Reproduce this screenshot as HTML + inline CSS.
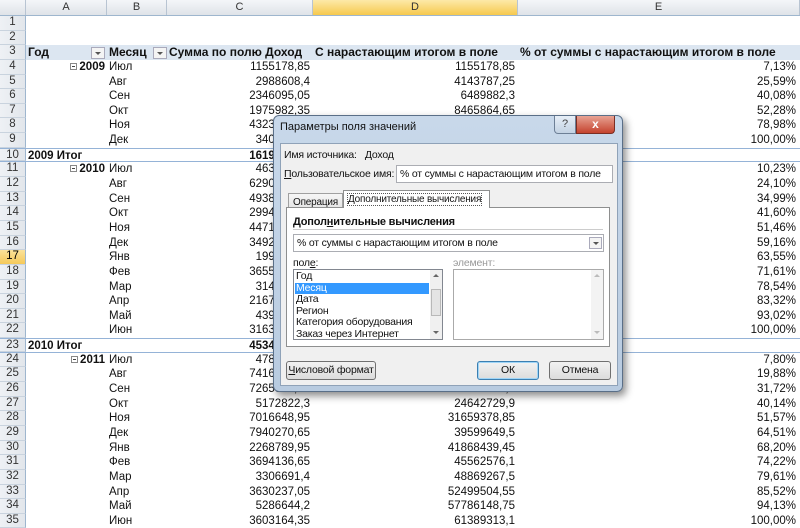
<!DOCTYPE html>
<html><head><meta charset="utf-8">
<style>
*{margin:0;padding:0;box-sizing:border-box}
body{width:800px;height:528px;overflow:hidden;background:#fff;font-family:"Liberation Sans","DejaVu Sans",sans-serif;font-size:11.5px;color:#111;position:relative}
.hdr{position:absolute;top:0;left:0;width:800px;height:16px;background:linear-gradient(#f4f6f9,#dfe3e8);border-bottom:1px solid #9eb6ce;display:flex}
.hdr div{border-right:1px solid #b8c4d2;text-align:center;font-size:11px;line-height:15px;color:#333}
.rows{position:absolute;top:16px;left:0;width:800px}
.r{height:14.65px;display:flex;line-height:14.65px;white-space:nowrap}
.n{width:26px;background:linear-gradient(90deg,#eef1f5,#e2e6eb);border-right:1px solid #9eb6ce;border-bottom:1px solid #c9d3de;text-align:center;color:#333;font-size:11.5px;line-height:13.65px}
.a{width:81px;text-align:right;padding-right:2px;font-weight:bold}
.b{width:60px;padding-left:2px}
.c{width:146px;text-align:right;padding-right:3px}
.d{width:205px;text-align:right;padding-right:3px}
.e{width:282px;text-align:right;padding-right:4px}
.h3 > div:not(.n){background:#dce6f1;font-weight:bold;font-size:12px}
.tot{border-top:1px solid #95b3d7;border-bottom:1px solid #95b3d7}
.tot .n{border-bottom:1px solid #c9d3de}
.tot .a{text-align:left;padding-left:2px;width:141px}
.tot .b{display:none}
.tot .c{font-weight:bold;width:146px}
.bx{display:inline-block;width:7px;height:7px;border:1px solid #888;position:relative;margin-right:2px;vertical-align:0px}
.bx:after{content:"";position:absolute;left:1px;right:1px;top:2px;height:1px;background:#444}
.dd{display:inline-block;width:14px;height:12px;border:1px solid #aab;background:#f4f4f4;vertical-align:middle;position:relative}
.dd:after{content:"";position:absolute;left:3px;top:4px;border-left:3px solid transparent;border-right:3px solid transparent;border-top:3px solid #555}
.sel{background:linear-gradient(#fbe29a,#f5c95a)!important;color:#000}
.dlg{position:absolute;left:273px;top:115px;width:350px;height:277px;background:linear-gradient(#c8d8ea,#b8cbe0);border:1px solid #5a6f88;border-radius:6px;box-shadow:3px 4px 8px rgba(0,0,0,.45)}
.ttl{position:absolute;left:6px;top:5px;font-size:11px;color:#111}
.inner{position:absolute;left:6px;top:27px;width:338px;height:243px;background:#f0f0f0;border:1px solid #8fa2b8}
.tb{position:absolute;font-size:10.5px;letter-spacing:-0.2px;color:#111;white-space:nowrap}
.inp{position:absolute;background:#fff;border:1px solid #abadb3}
.btn{position:absolute;height:19px;border:1px solid #707070;border-radius:3px;background:linear-gradient(#f2f2f2,#dcdcdc);text-align:center;font-size:10.5px;letter-spacing:-0.2px;line-height:17px;white-space:nowrap}
</style></head><body>
<div class="hdr">
<div style="width:26px"></div><div style="width:81px">A</div><div style="width:60px">B</div><div style="width:146px">C</div><div style="width:205px;background:linear-gradient(#fde9a8,#f6c94e);">D</div><div style="width:282px">E</div>
</div>
<div class="rows">
<div class="r"><div class="n">1</div></div>
<div class="r"><div class="n">2</div></div>
<div class="r h3"><div class="n">3</div><div class="a" style="text-align:left;padding-left:2px;display:flex;justify-content:space-between;align-items:center">Год<span class="dd"></span></div><div class="b" style="display:flex;justify-content:space-between;align-items:center">Месяц<span class="dd"></span></div><div class="c" style="text-align:left;padding-left:2px">Сумма по полю Доход</div><div class="d" style="text-align:left;padding-left:2px">С нарастающим итогом в поле</div><div class="e" style="text-align:left;padding-left:2px">% от суммы с нарастающим итогом в поле</div></div>
<div class="r"><div class="n">4</div><div class="a"><span class="bx"></span>2009</div><div class="b">Июл</div><div class="c">1155178,85</div><div class="d">1155178,85</div><div class="e">7,13%</div></div>
<div class="r"><div class="n">5</div><div class="a"></div><div class="b">Авг</div><div class="c">2988608,4</div><div class="d">4143787,25</div><div class="e">25,59%</div></div>
<div class="r"><div class="n">6</div><div class="a"></div><div class="b">Сен</div><div class="c">2346095,05</div><div class="d">6489882,3</div><div class="e">40,08%</div></div>
<div class="r"><div class="n">7</div><div class="a"></div><div class="b">Окт</div><div class="c">1975982,35</div><div class="d">8465864,65</div><div class="e">52,28%</div></div>
<div class="r"><div class="n">8</div><div class="a"></div><div class="b">Ноя</div><div class="c">4323581,35</div><div class="d">12789446</div><div class="e">78,98%</div></div>
<div class="r"><div class="n">9</div><div class="a"></div><div class="b">Дек</div><div class="c">3404416,9</div><div class="d">16193862,9</div><div class="e">100,00%</div></div>
<div class="r tot"><div class="n">10</div><div class="a">2009 Итог</div><div class="b"></div><div class="c">16193862,9</div><div class="d"></div><div class="e"></div></div>
<div class="r"><div class="n">11</div><div class="a"><span class="bx"></span>2010</div><div class="b">Июл</div><div class="c">4637915,4</div><div class="d">4637915,4</div><div class="e">10,23%</div></div>
<div class="r"><div class="n">12</div><div class="a"></div><div class="b">Авг</div><div class="c">6290043,75</div><div class="d">10927959,15</div><div class="e">24,10%</div></div>
<div class="r"><div class="n">13</div><div class="a"></div><div class="b">Сен</div><div class="c">4938146,55</div><div class="d">15866105,7</div><div class="e">34,99%</div></div>
<div class="r"><div class="n">14</div><div class="a"></div><div class="b">Окт</div><div class="c">2994950,65</div><div class="d">18861056,35</div><div class="e">41,60%</div></div>
<div class="r"><div class="n">15</div><div class="a"></div><div class="b">Ноя</div><div class="c">4471720,25</div><div class="d">23332776,6</div><div class="e">51,46%</div></div>
<div class="r"><div class="n">16</div><div class="a"></div><div class="b">Дек</div><div class="c">3492043,15</div><div class="d">26824819,75</div><div class="e">59,16%</div></div>
<div class="r"><div class="n sel">17</div><div class="a"></div><div class="b">Янв</div><div class="c">1990463,9</div><div class="d">28815283,65</div><div class="e">63,55%</div></div>
<div class="r"><div class="n">18</div><div class="a"></div><div class="b">Фев</div><div class="c">3655312,35</div><div class="d">32470596</div><div class="e">71,61%</div></div>
<div class="r"><div class="n">19</div><div class="a"></div><div class="b">Мар</div><div class="c">3142540,4</div><div class="d">35613136,4</div><div class="e">78,54%</div></div>
<div class="r"><div class="n">20</div><div class="a"></div><div class="b">Апр</div><div class="c">2167870,05</div><div class="d">37781006,45</div><div class="e">83,32%</div></div>
<div class="r"><div class="n">21</div><div class="a"></div><div class="b">Май</div><div class="c">4397939,1</div><div class="d">42178945,55</div><div class="e">93,02%</div></div>
<div class="r"><div class="n">22</div><div class="a"></div><div class="b">Июн</div><div class="c">3163164,35</div><div class="d">45342109,9</div><div class="e">100,00%</div></div>
<div class="r tot"><div class="n">23</div><div class="a">2010 Итог</div><div class="b"></div><div class="c">45342109,9</div><div class="d"></div><div class="e"></div></div>
<div class="r"><div class="n">24</div><div class="a"><span class="bx"></span>2011</div><div class="b">Июл</div><div class="c">4787624,5</div><div class="d">4787624,5</div><div class="e">7,80%</div></div>
<div class="r"><div class="n">25</div><div class="a"></div><div class="b">Авг</div><div class="c">7416974,05</div><div class="d">12204598,55</div><div class="e">19,88%</div></div>
<div class="r"><div class="n">26</div><div class="a"></div><div class="b">Сен</div><div class="c">7265309,05</div><div class="d">19469907,6</div><div class="e">31,72%</div></div>
<div class="r"><div class="n">27</div><div class="a"></div><div class="b">Окт</div><div class="c">5172822,3</div><div class="d">24642729,9</div><div class="e">40,14%</div></div>
<div class="r"><div class="n">28</div><div class="a"></div><div class="b">Ноя</div><div class="c">7016648,95</div><div class="d">31659378,85</div><div class="e">51,57%</div></div>
<div class="r"><div class="n">29</div><div class="a"></div><div class="b">Дек</div><div class="c">7940270,65</div><div class="d">39599649,5</div><div class="e">64,51%</div></div>
<div class="r"><div class="n">30</div><div class="a"></div><div class="b">Янв</div><div class="c">2268789,95</div><div class="d">41868439,45</div><div class="e">68,20%</div></div>
<div class="r"><div class="n">31</div><div class="a"></div><div class="b">Фев</div><div class="c">3694136,65</div><div class="d">45562576,1</div><div class="e">74,22%</div></div>
<div class="r"><div class="n">32</div><div class="a"></div><div class="b">Мар</div><div class="c">3306691,4</div><div class="d">48869267,5</div><div class="e">79,61%</div></div>
<div class="r"><div class="n">33</div><div class="a"></div><div class="b">Апр</div><div class="c">3630237,05</div><div class="d">52499504,55</div><div class="e">85,52%</div></div>
<div class="r"><div class="n">34</div><div class="a"></div><div class="b">Май</div><div class="c">5286644,2</div><div class="d">57786148,75</div><div class="e">94,13%</div></div>
<div class="r"><div class="n">35</div><div class="a"></div><div class="b">Июн</div><div class="c">3603164,35</div><div class="d">61389313,1</div><div class="e">100,00%</div></div>
</div>

<div class="dlg">
<div class="ttl">Параметры поля значений</div>
<div style="position:absolute;left:280px;top:0;width:22px;height:18px;border:1px solid #6d7f96;border-top:none;border-radius:0 0 0 4px;background:linear-gradient(#e6eef7,#c3d2e3);text-align:center;font-size:11px;line-height:17px;color:#444">?</div>
<div style="position:absolute;left:302px;top:0;width:39px;height:18px;border:1px solid #7a2e24;border-top:none;border-radius:0 0 4px 0;background:linear-gradient(#e8a293,#c4432e);text-align:center;font-size:12px;line-height:17px;color:#fff;font-weight:bold">x</div>
<div class="inner">
<div class="tb" style="left:3px;top:5px">Имя источника:&nbsp;&nbsp; Доход</div>
<div class="tb" style="left:3px;top:24px"><u>П</u>ользовательское имя:</div>
<div class="inp" style="left:115px;top:21px;width:217px;height:18px"><span class="tb" style="left:3px;top:2px">% от суммы с нарастающим итогом в поле</span></div>
<div class="tb" style="left:7px;top:49px;width:55px;height:16px;border:1px solid #a0a0a0;border-bottom:none;background:linear-gradient(#f6f6f6,#e4e4e4);padding:3px 0 0 4px;font-size:10px">Операция</div>
<div class="tb" style="left:62px;top:46px;width:147px;height:18px;border:1px solid #8e8f8f;border-bottom:none;background:#fff;padding:3px 0 0 4px;z-index:2;font-size:10px"><span style="outline:1px dotted #555">Дополнительные вычисления</span></div>
<div style="position:absolute;left:5px;top:63px;width:324px;height:140px;border:1px solid #8e8f8f;background:#fff">
<div class="tb" style="left:6px;top:8px;font-weight:bold;font-size:11px">Допол<u>н</u>ительные вычисления</div>
<div style="position:absolute;left:6px;top:21px;width:310px;height:1px;background:#ccc"></div>
<div class="inp" style="left:6px;top:26px;width:311px;height:18px"><span class="tb" style="left:3px;top:2px">% от суммы с нарастающим итогом в поле</span><span class="dd" style="position:absolute;right:1px;top:2px;width:13px"></span></div>
<div class="tb" style="left:6px;top:49px">пол<u>е</u>:</div>
<div class="tb" style="left:166px;top:49px;color:#999">элемент:</div>
<div class="inp" style="left:6px;top:61px;width:150px;height:71px;border-color:#828790">
<div style="position:absolute;left:1px;top:13px;width:134px;height:11px;background:#3399ff"></div>
<div class="tb" style="left:2px;top:1px;line-height:11.5px">Год<br><span style="color:#fff">Месяц</span><br>Дата<br>Регион<br>Категория оборудования<br>Заказ через Интернет</div>
<div style="position:absolute;right:0;top:0;width:12px;height:69px;background:#f0f0f0"><div style="position:absolute;left:1px;top:19px;width:10px;height:27px;background:#e4e4e4;border:1px solid #b8b8b8"></div><div style="position:absolute;left:3px;top:4px;border:3px solid transparent;border-bottom-color:#666;border-top:none"></div><div style="position:absolute;left:3px;top:61px;border:3px solid transparent;border-top-color:#666;border-bottom:none"></div></div>
</div>
<div class="inp" style="left:166px;top:61px;width:151px;height:71px;border-color:#aaa">
<div style="position:absolute;right:0;top:0;width:12px;height:69px;background:#f3f3f3"><div style="position:absolute;left:3px;top:4px;border:3px solid transparent;border-bottom-color:#bbb;border-top:none"></div><div style="position:absolute;left:3px;top:61px;border:3px solid transparent;border-top-color:#bbb;border-bottom:none"></div></div>
</div>
</div>
<div class="btn" style="left:5px;top:217px;width:90px"><u>Ч</u>исловой формат</div>
<div class="btn" style="left:196px;top:217px;width:62px;border-color:#3c7fb1;box-shadow:inset 0 0 0 1px #9fd5f7">ОК</div>
<div class="btn" style="left:268px;top:217px;width:62px">Отмена</div>
</div>
</div>
</body></html>
